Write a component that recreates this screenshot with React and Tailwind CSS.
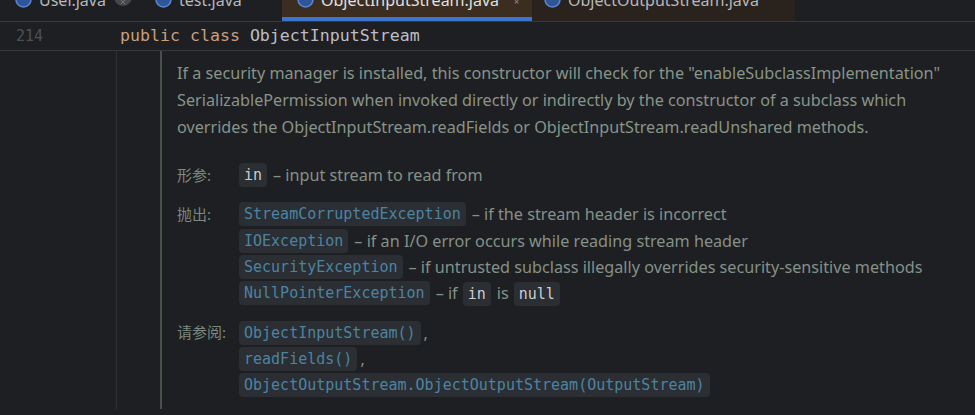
import { X } from "lucide-react";

const SANS = "font-['Noto_Sans','Noto_Sans_CJK_SC',sans-serif]";
const MONO = "font-['DejaVu_Sans_Mono',monospace]";

// Java class icon, mostly cut off by the top edge
function ClassIcon() {
  return (
    <svg width="17" height="8" viewBox="0 0 17 8" className="shrink-0">
      <circle cx="8.5" cy="-0.5" r="7.5" fill="#2f5597" stroke="#5b86d6" strokeWidth="1.5" />
    </svg>
  );
}

function Tab({ width, pl, bg, active, hoverClose, children }) {
  return (
    <div className={`relative flex h-[21px] shrink-0 items-start gap-[7px] ${width} ${pl} ${bg}`}>
      <ClassIcon />
      <span className={`${SANS} -mt-[8px] whitespace-nowrap text-[16px] leading-none ${active ? "text-[#dfe1e5]" : "text-[#b4b8bf]"}`}>
        {children}
      </span>
      {hoverClose && (
        <span className="ml-[1px] -mt-[4px] flex h-[10px] w-[18px] items-end justify-center rounded-b-full bg-[#45474b]">
          <X size={8} className="text-[#8a8d92]" />
        </span>
      )}
      {active && (
        <>
          <span className="ml-[8px] -mt-[3px] text-[9px] leading-none text-[#8f939a]">×</span>
          <div className="absolute bottom-0 left-0 h-[4px] w-full bg-[#3d74d0]" />
        </>
      )}
    </div>
  );
}

function Code({ children, link }) {
  return (
    <span
      className={`inline-block rounded-[4px] bg-[#2b2e32] px-[5px] py-[3px] ${MONO} text-[15px] leading-[18px] ${
        link ? "text-[#4b84a3]" : "text-[#c9ccd1]"
      }`}
    >
      {children}
    </span>
  );
}

function Row({ children }) {
  return <div className="flex h-[26.3px] items-center whitespace-nowrap">{children}</div>;
}

function Desc({ children }) {
  return <span className="ml-[6px] text-[16.2px] leading-[20px] text-[#849188]">{children}</span>;
}

function Section({ label, className = "", children }) {
  return (
    <div className={`flex ${className}`}>
      <div className="flex h-[26.3px] w-[62px] shrink-0 items-center text-[15px] text-[#7b887f]">{label}</div>
      <div className="flex flex-col">{children}</div>
    </div>
  );
}

export default function App() {
  return (
    <div className={`h-[415px] w-[975px] overflow-hidden bg-[#1e1f22] ${SANS}`}>
      {/* Tab strip */}
      <div className="flex h-[22px] overflow-hidden border-b border-[#36383c] bg-[#1e1f22]">
        <Tab width="w-[141px]" pl="pl-[15px]" bg="" hoverClose>
          User.java
        </Tab>
        <Tab width="w-[141px]" pl="pl-[14px]" bg="">
          test.java
        </Tab>
        <Tab width="w-[250px]" pl="pl-[15px]" bg="bg-[#3b2d1f]" active>
          ObjectInputStream.java
        </Tab>
        <Tab width="w-[263px]" pl="pl-[12px]" bg="bg-[#2a231d]">
          ObjectOutputStream.java
        </Tab>
      </div>

      {/* Current line */}
      <div className="flex h-[29px] items-center border-b border-[#35373b]">
        <span className={`${MONO} w-[120px] pl-[16px] text-[15px] text-[#4d5157]`}>214</span>
        <span className={`${MONO} whitespace-pre text-[16.6px] text-[#bcbec4]`}>
          <span className="text-[#c99e80]">public class </span>ObjectInputStream
        </span>
      </div>

      {/* Rendered doc */}
      <div className="flex">
        <div className="w-[117px] shrink-0 border-r border-[#2f3135]" />
        <div className="w-[43px] shrink-0" />
        <div className="border-l-2 border-[#48504c] pb-[11px] pl-[15px] pt-[9px]">
          <p className="whitespace-nowrap text-[16.2px] leading-[27px] text-[#879489]">
            If a security manager is installed, this constructor will check for the "enableSubclassImplementation"
            <br />
            SerializablePermission when invoked directly or indirectly by the constructor of a subclass which
            <br />
            overrides the ObjectInputStream.readFields or ObjectInputStream.readUnshared methods.
          </p>

          <Section label="形参:" className="mt-[21px]">
            <Row>
              <Code>in</Code>
              <Desc>– input stream to read from</Desc>
            </Row>
          </Section>

          <Section label="抛出:" className="mt-[13px]">
            <Row>
              <Code link>StreamCorruptedException</Code>
              <Desc>– if the stream header is incorrect</Desc>
            </Row>
            <Row>
              <Code link>IOException</Code>
              <Desc>– if an I/O error occurs while reading stream header</Desc>
            </Row>
            <Row>
              <Code link>SecurityException</Code>
              <Desc>– if untrusted subclass illegally overrides security-sensitive methods</Desc>
            </Row>
            <Row>
              <Code link>NullPointerException</Code>
              <Desc>– if</Desc>
              <span className="ml-[5px]">
                <Code>in</Code>
              </span>
              <Desc>is</Desc>
              <span className="ml-[5px]">
                <Code>null</Code>
              </span>
            </Row>
          </Section>

          <Section label="请参阅:" className="mt-[13px]">
            <Row>
              <Code link>ObjectInputStream()</Code>
              <span className="ml-[3px] text-[16px] leading-[20px] text-[#849188]">,</span>
            </Row>
            <Row>
              <Code link>readFields()</Code>
              <span className="ml-[3px] text-[16px] leading-[20px] text-[#849188]">,</span>
            </Row>
            <Row>
              <Code link>ObjectOutputStream.ObjectOutputStream(OutputStream)</Code>
            </Row>
          </Section>
        </div>
      </div>
    </div>
  );
}
